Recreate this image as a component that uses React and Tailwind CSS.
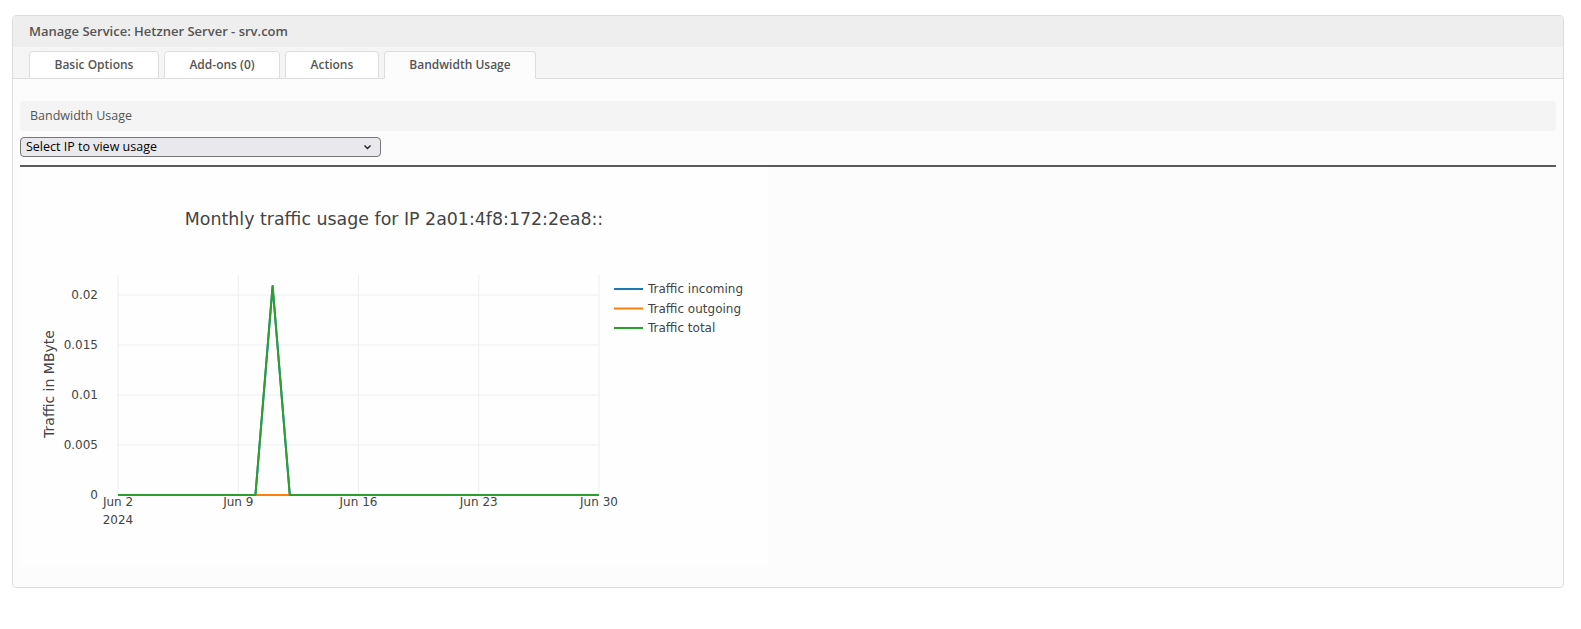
import React from "react";

const PX0 = 98;
const PX1 = 579;
const DAY = (PX1 - PX0) / 28;
const Y0 = 328;
const yOf = (v) => Y0 - (v / 0.005) * 50;
const xOf = (d) => PX0 + (d - 2) * DAY;

function Chart() {
  const vgrid = [2, 9, 16, 23, 30];
  const hgrid = [0.005, 0.01, 0.015, 0.02];
  const font = "'DejaVu Sans', Verdana, sans-serif";
  const peakPts = `${xOf(2)},${Y0} ${xOf(10)},${Y0} ${xOf(11)},${yOf(0.0209)} ${xOf(12)},${Y0} ${xOf(30)},${Y0}`;
  return (
    <svg width="748" height="400" viewBox="0 0 748 400" className="block" style={{ fontFamily: font }}>
      <rect x="0" y="0" width="748" height="400" fill="#fefefe" />
      <text x="374" y="52" textAnchor="middle" dominantBaseline="central" fontSize="17.4" fill="#444">
        Monthly traffic usage for IP 2a01:4f8:172:2ea8::
      </text>
      {vgrid.map((d) => (
        <line key={d} x1={xOf(d)} x2={xOf(d)} y1="108" y2={Y0} stroke="#eeeeee" strokeWidth="1" />
      ))}
      {hgrid.map((v) => (
        <line key={v} x1={PX0} x2={PX1} y1={yOf(v)} y2={yOf(v)} stroke="#eeeeee" strokeWidth="1" />
      ))}
      <line x1={PX0} x2={PX1} y1={Y0} y2={Y0} stroke="#444" strokeWidth="1" />
      {[0, 0.005, 0.01, 0.015, 0.02].map((v) => (
        <text key={v} x="78" y={yOf(v)} textAnchor="end" dominantBaseline="central" fontSize="12" fill="#444">
          {v === 0 ? "0" : String(v)}
        </text>
      ))}
      {[
        [2, "Jun 2"],
        [9, "Jun 9"],
        [16, "Jun 16"],
        [23, "Jun 23"],
        [30, "Jun 30"],
      ].map(([d, t]) => (
        <text key={d} x={xOf(d)} y="335" textAnchor="middle" dominantBaseline="central" fontSize="12" fill="#444">
          {t}
        </text>
      ))}
      <text x={xOf(2)} y="353" textAnchor="middle" dominantBaseline="central" fontSize="12" fill="#444">
        2024
      </text>
      <text
        x="29"
        y="217"
        textAnchor="middle"
        dominantBaseline="central"
        fontSize="14"
        fill="#444"
        transform="rotate(-90 29 217)"
      >
        Traffic in MByte
      </text>
      <polyline points={peakPts} fill="none" stroke="#1f77b4" strokeWidth="2" strokeLinejoin="round" />
      <line x1={xOf(2)} x2={xOf(30)} y1={Y0} y2={Y0} stroke="#ff7f0e" strokeWidth="2" />
      <polyline points={peakPts} fill="none" stroke="#2ca02c" strokeWidth="2" strokeLinejoin="round" />
      {[
        ["#1f77b4", "Traffic incoming", 122],
        ["#ff7f0e", "Traffic outgoing", 141.5],
        ["#2ca02c", "Traffic total", 161],
      ].map(([c, t, y]) => (
        <g key={t}>
          <line x1="594" x2="623" y1={y} y2={y} stroke={c} strokeWidth="2" />
          <text x="628" y={y} dominantBaseline="central" fontSize="12" fill="#444">
            {t}
          </text>
        </g>
      ))}
    </svg>
  );
}

export default function App() {
  const tabs = ["Basic Options", "Add-ons (0)", "Actions", "Bandwidth Usage"];
  return (
    <div className="min-h-[629px] w-full bg-white pt-[15px] pl-[12px] pr-[17px]" style={{ fontFamily: "'Open Sans', 'Noto Sans', sans-serif" }}>
      <div className="h-[573px] overflow-hidden rounded-[4px] border border-[#dddddd] bg-[#fcfcfc]">
        <div className="flex h-[31px] items-center bg-[#eeeeee] pl-[16px] text-[13px] font-semibold text-[#555555]">
          Manage Service: Hetzner Server - srv.com
        </div>
        <div className="flex h-[32px] items-end gap-[5px] border-b border-[#dddddd] bg-[#f5f5f5] pl-[16px]">
          {tabs.map((t, i) => {
            const active = i === 3;
            return (
              <div
                key={t}
                className={
                  "relative -mb-px flex h-[28px] items-center justify-center rounded-t-[4px] border border-[#dddddd] px-[24.5px] text-[12px] font-semibold text-[#555555] " +
                  (active ? "border-b-[#fcfcfc] bg-[#fcfcfc]" : "bg-white")
                }
              >
                {t}
              </div>
            );
          })}
        </div>
        <div className="px-[7px] pt-[22px]">
          <div className="flex h-[30px] items-center rounded-[4px] bg-[#f4f4f4] pl-[10px] text-[12.5px] text-[#555555]">
            Bandwidth Usage
          </div>
          <div className="mt-[6px] flex h-[20px] w-[361px] items-center justify-between rounded-[4px] border border-[#767676] bg-[#e9e9ed] pl-[5px] pr-[8px] text-[12.5px] text-black">
            <span>Select IP to view usage</span>
            <svg width="9" height="6" viewBox="0 0 9 6">
              <path d="M1.5 1.5 L4.5 4.5 L7.5 1.5" fill="none" stroke="#222" strokeWidth="1.4" />
            </svg>
          </div>
          <div className="mt-[8px] h-[2px] w-full bg-[#5a5a5a]" />
          <Chart />
        </div>
      </div>
    </div>
  );
}
